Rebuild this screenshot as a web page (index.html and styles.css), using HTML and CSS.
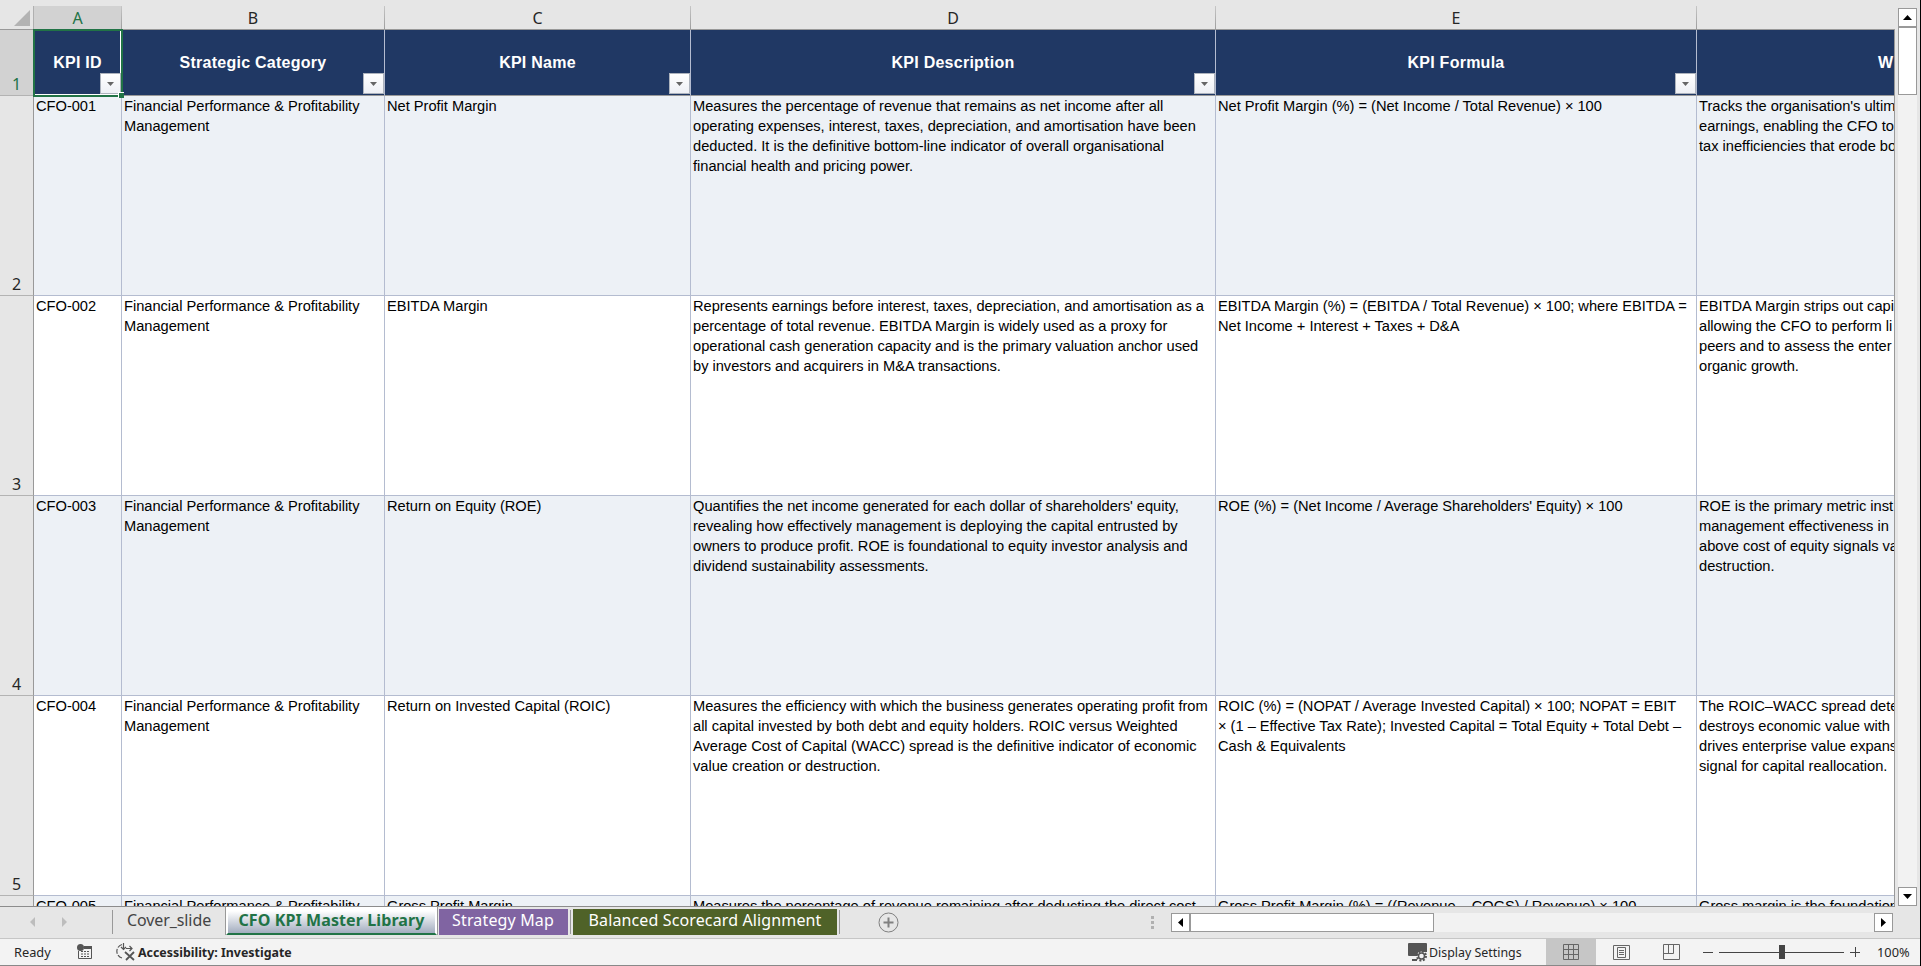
FILE: index.html
```
<!DOCTYPE html>
<html lang="en">
<head>
    <meta charset="UTF-8">
    <meta name="viewport" content="width=device-width, initial-scale=1.0">
    <title>CFO KPI Master Library</title>
    <link rel="stylesheet" href="styles.css">
</head>
<body>
    <div class="workspace">
        <div class="sheet">
            <!-- Column letters -->
            <div class="row letters">
                <div class="corner"></div>
                <div class="letter selected">A</div>
                <div class="letter">B</div>
                <div class="letter">C</div>
                <div class="letter">D</div>
                <div class="letter">E</div>
                <div class="letter"></div>
            </div>

            <!-- Header row -->
            <div class="row titles">
                <div class="number selected">1</div>
                <div class="title active"><span>KPI ID</span><i class="filter"></i><b class="handle"></b></div>
                <div class="title"><span>Strategic Category</span><i class="filter"></i></div>
                <div class="title"><span>KPI Name</span><i class="filter"></i></div>
                <div class="title"><span>KPI Description</span><i class="filter"></i></div>
                <div class="title"><span>KPI Formula</span><i class="filter"></i></div>
                <div class="title last"><span>W</span></div>
            </div>

            <!-- KPI rows -->
            <div class="row banded">
                <div class="number">2</div>
                <div class="cell">CFO-001</div>
                <div class="cell">Financial Performance &amp; Profitability<br>Management</div>
                <div class="cell">Net Profit Margin</div>
                <div class="cell">Measures the percentage of revenue that remains as net income after all<br>operating expenses, interest, taxes, depreciation, and amortisation have been<br>deducted. It is the definitive bottom-line indicator of overall organisational<br>financial health and pricing power.</div>
                <div class="cell">Net Profit Margin (%) = (Net Income / Total Revenue) × 100</div>
                <div class="cell">Tracks the organisation's ultim<br>earnings, enabling the CFO to<br>tax inefficiencies that erode bo</div>
            </div>
            <div class="row">
                <div class="number">3</div>
                <div class="cell">CFO-002</div>
                <div class="cell">Financial Performance &amp; Profitability<br>Management</div>
                <div class="cell">EBITDA Margin</div>
                <div class="cell">Represents earnings before interest, taxes, depreciation, and amortisation as a<br>percentage of total revenue. EBITDA Margin is widely used as a proxy for<br>operational cash generation capacity and is the primary valuation anchor used<br>by investors and acquirers in M&amp;A transactions.</div>
                <div class="cell">EBITDA Margin (%) = (EBITDA / Total Revenue) × 100; where EBITDA =<br>Net Income + Interest + Taxes + D&amp;A</div>
                <div class="cell">EBITDA Margin strips out capi<br>allowing the CFO to perform li<br>peers and to assess the enter<br>organic growth.</div>
            </div>
            <div class="row banded">
                <div class="number">4</div>
                <div class="cell">CFO-003</div>
                <div class="cell">Financial Performance &amp; Profitability<br>Management</div>
                <div class="cell">Return on Equity (ROE)</div>
                <div class="cell">Quantifies the net income generated for each dollar of shareholders' equity,<br>revealing how effectively management is deploying the capital entrusted by<br>owners to produce profit. ROE is foundational to equity investor analysis and<br>dividend sustainability assessments.</div>
                <div class="cell">ROE (%) = (Net Income / Average Shareholders' Equity) × 100</div>
                <div class="cell">ROE is the primary metric inst<br>management effectiveness in<br>above cost of equity signals va<br>destruction.</div>
            </div>
            <div class="row">
                <div class="number">5</div>
                <div class="cell">CFO-004</div>
                <div class="cell">Financial Performance &amp; Profitability<br>Management</div>
                <div class="cell">Return on Invested Capital (ROIC)</div>
                <div class="cell">Measures the efficiency with which the business generates operating profit from<br>all capital invested by both debt and equity holders. ROIC versus Weighted<br>Average Cost of Capital (WACC) spread is the definitive indicator of economic<br>value creation or destruction.</div>
                <div class="cell">ROIC (%) = (NOPAT / Average Invested Capital) × 100; NOPAT = EBIT<br>× (1 – Effective Tax Rate); Invested Capital = Total Equity + Total Debt –<br>Cash &amp; Equivalents</div>
                <div class="cell">The ROIC–WACC spread dete<br>destroys economic value with<br>drives enterprise value expans<br>signal for capital reallocation.</div>
            </div>
            <div class="row banded cut">
                <div class="number"></div>
                <div class="cell">CFO-005</div>
                <div class="cell">Financial Performance &amp; Profitability</div>
                <div class="cell">Gross Profit Margin</div>
                <div class="cell">Measures the percentage of revenue remaining after deducting the direct cost</div>
                <div class="cell">Gross Profit Margin (%) = ((Revenue – COGS) / Revenue) × 100</div>
                <div class="cell">Gross margin is the foundation</div>
            </div>
        </div>

        <div class="vscroll">
            <div class="arrow"><svg width="9" height="5" viewBox="0 0 9 5"><path d="M0 5L4.500 0L9 5z"/></svg></div>
            <div class="thumb"></div>
            <div class="arrow end"><svg width="9" height="5" viewBox="0 0 9 5"><path d="M0 0H9L4.500 5z"/></svg></div>
        </div>
    </div>

    <div class="tabbar">
        <div class="tab-nav">
            <svg width="5" height="10" viewBox="0 0 5 10"><path d="M5 0V10L0 5z"/></svg>
            <svg width="5" height="10" viewBox="0 0 5 10"><path d="M0 0V10L5 5z"/></svg>
        </div>
        <div class="tab cover"><span>Cover_slide</span></div>
        <div class="tab current"><span>CFO KPI Master Library</span></div>
        <div class="tab purple"><span>Strategy Map</span></div>
        <div class="divider"></div>
        <div class="tab green"><span>Balanced Scorecard Alignment</span></div>
        <div class="divider"></div>
        <svg class="add" width="21" height="21" viewBox="0 0 21 21"><circle cx="10.500" cy="10.500" r="9.500"/><path class="plus" d="M10.500 5.500v10M5.500 10.500h10"/></svg>
        <div class="grip"><i></i><i></i><i></i></div>
        <div class="hscroll">
            <div class="arrow"><svg width="5" height="9" viewBox="0 0 5 9"><path d="M5 0V9L0 4.500z"/></svg></div>
            <div class="thumb"></div>
            <div class="arrow end"><svg width="5" height="9" viewBox="0 0 5 9"><path d="M0 0V9L5 4.500z"/></svg></div>
        </div>
    </div>

    <div class="status">
        <span class="ready">Ready</span>
        <svg class="macro" width="16" height="16" viewBox="0 0 16 16"><path class="line" d="M7 2.500H14.500V14.500H1.500V7"/><path d="M7 2h8v3H7z"/><circle cx="3.500" cy="3.500" r="3.500"/><path class="dots" d="M4 7.500h9M4 10h9M4 12.500h9"/></svg>
        <svg class="access" width="19" height="18" viewBox="0 0 19 18"><path class="ring" d="M6 1.500A7 7 0 0 0 6 15"/><path d="M7.500 0v6M5 4l2.500 2.500L10 4M10 5.500h6M13.500 3l2.500 2.500L13.500 8"/><path class="cross" d="M9 9l9 8M18 9l-8 8"/></svg>
        <b class="investigate">Accessibility: Investigate</b>
        <svg class="monitor" width="19" height="19" viewBox="0 0 19 19"><path d="M1 0h17q1 0 1 1v8h-9v4H1q-1 0-1-1V1q0-1 1-1zM4 16h5v2H4z"/><circle class="gear-teeth" cx="13.500" cy="13" r="4.500"/><circle class="gear" cx="13.500" cy="13" r="3"/></svg>
        <span class="display">Display Settings</span>
        <div class="view on"><svg width="16" height="16" viewBox="0 0 16 16"><path d="M.5.500h15v15H.5zM.5 5.500h15M.5 10.500h15M5.500.500v15M10.500.500v15"/></svg></div>
        <div class="view"><svg width="17" height="15" viewBox="0 0 17 15"><path d="M.5.500h16v14H.5zM4.500 2.500h8v10h-8zM6 5.500h5M6 7.500h5M6 9.500h5"/></svg></div>
        <div class="view"><svg width="17" height="16" viewBox="0 0 17 16"><path d="M.5.500h16v15H.5zM.5 9.500h10V.500M5.500.500v9"/></svg></div>
        <div class="zoom"><i class="minus"></i><div class="track"><i class="knob"></i></div><i class="more"></i></div>
        <span class="percent">100%</span>
    </div>
</body>
</html>
```

FILE: styles.css
```
* {
    box-sizing: border-box;
}

body {
    margin: 0;
    width: 1921px;
    height: 966px;
    overflow: hidden;
    background: #e6e6e6;
    border-right: 1px solid #000;
    font-family: "Noto Sans", "Open Sans", sans-serif;
    color: #262626;
}

.workspace {
    display: flex;
    height: 907px;
}

/* Grid */
.sheet {
    width: 1895px;
    height: 907px;
    overflow: hidden;
    border-bottom: 1px solid #8c8c8c;
}

.row {
    display: grid;
    grid-template-columns: 34px 88px 263px 306px 525px 481px 197px;
    width: 1895px;
    height: 200px;
    border-right: 1px solid #999;
}

.cut {
    height: 11px;
    overflow: hidden;
}

.letters {
    height: 30px;
    padding-top: 6px;
    border-right: 0;
    border-bottom: 1px solid #999;
}

.letter {
    border-right: 1px solid;
    border-image: linear-gradient(#c8c8c8, #999) 1;
    text-align: center;
    font-size: 16px;
    line-height: 24px;
}

.letter:last-child {
    border-right: 0;
}

.letter.selected,
.number.selected {
    background: #d2d2d2;
    color: #217346;
}

.corner {
    border-right: 1px solid #b0b0b0;
}

.corner::after {
    content: "";
    display: block;
    width: 16px;
    height: 16px;
    margin: 4px 0 0 14px;
    background: #b3b3b3;
    clip-path: polygon(100% 0, 100% 100%, 0 100%);
}

.number {
    display: flex;
    align-items: flex-end;
    justify-content: center;
    background: #e6e6e6;
    border-right: 1px solid #999;
    border-bottom: 1px solid #b3b3b3;
    font-size: 16px;
    line-height: 22px;
}

.titles {
    height: 66px;
}

.title {
    position: relative;
    display: flex;
    align-items: center;
    justify-content: center;
    background: #203864;
    border-right: 1px solid #b4bcd0;
    border-bottom: 1px solid #999;
    color: #fff;
    font: bold 16px/20px "Liberation Sans", Arial, sans-serif;
    letter-spacing: 0.25px;
    white-space: nowrap;
}

.title.last {
    justify-content: flex-start;
    padding-left: 181px;
    border-right: 0;
    overflow: hidden;
}

.title.active {
    border-right-color: #217346;
    box-shadow: inset 0 0 0 1px #fff;
    outline: 2px solid #217346;
    outline-offset: -1px;
    z-index: 1;
}

.filter {
    position: absolute;
    right: 0;
    bottom: 1px;
    width: 21px;
    height: 21px;
    border: 1px solid #adb3bd;
    background: linear-gradient(#fff, #eef0f5);
}

.filter::after {
    content: "";
    position: absolute;
    left: 6px;
    top: 8px;
    width: 7px;
    height: 4px;
    background: #666;
    clip-path: polygon(0 0, 100% 0, 50% 100%);
}

.handle {
    position: absolute;
    right: -3px;
    bottom: -3px;
    width: 6px;
    height: 6px;
    border: solid #fff;
    border-width: 1px 0 0 1px;
    background: #217346;
}

.cell {
    padding: 0 2px;
    border-right: 1px solid #b4bcd0;
    border-bottom: 1px solid #b4bcd0;
    background: #fff;
    color: #000;
    font: 14.67px/20px "Liberation Sans", Arial, sans-serif;
    letter-spacing: -0.02px;
    white-space: nowrap;
    overflow: hidden;
}

.cell:last-child {
    padding-right: 0;
    border-right: 0;
}

.banded .cell {
    background: #edf1f6;
}

/* Scroll bars */
.vscroll {
    display: flex;
    flex-direction: column;
    width: 19px;
    height: 898px;
    margin: 8px 0 0 3px;
    background: #f2f2f2;
}

.arrow {
    display: flex;
    align-items: center;
    justify-content: center;
    flex: none;
    width: 19px;
    height: 19px;
    border: 1px solid #999;
    background: #fff;
}

.thumb {
    border: 1px solid #999;
    background: #fff;
}

.vscroll .thumb {
    height: 68px;
}

.vscroll .end {
    margin-top: auto;
}

/* Sheet tabs */
.tabbar {
    display: flex;
    height: 32px;
    border-bottom: 1px solid #c6c6c6;
}

.tab-nav {
    display: flex;
    gap: 27px;
    width: 113px;
    height: 24px;
    margin-top: 3px;
    padding: 7px 0 0 30px;
    border-right: 1px solid #999;
}

.tab-nav path {
    fill: #bdbdbd;
}

.tab {
    display: flex;
    justify-content: center;
    height: 26px;
    margin-top: 2px;
    font-size: 16px;
    line-height: 23px;
    white-space: nowrap;
}

.cover {
    width: 113px;
    padding-right: 1px;
    color: #444;
    letter-spacing: -0.08px;
}

.current {
    width: 211px;
    height: 28px;
    margin-top: 0;
    padding-top: 2px;
    border: 2px solid #fff;
    border-top: 0;
    border-bottom: 2px solid #217346;
    background: linear-gradient(#fff 15%, #a3adbf);
    color: #217346;
    font-weight: bold;
    letter-spacing: 0.1px;
    box-shadow: -1px 0 #999, 1px 0 #999;
}

.purple {
    width: 129px;
    margin-left: 2px;
    padding-right: 1px;
    background: #8064a2;
    color: #fff;
    letter-spacing: 0.15px;
}

.green {
    width: 264px;
    margin-left: 2px;
    background: #4f6228;
    color: #fff;
    letter-spacing: 0.13px;
}

.divider {
    width: 1px;
    height: 24px;
    margin: 3px 0 0 2px;
    background: #999;
}

.add {
    margin: 5px 0 0 38px;
    fill: none;
    stroke: #808080;
}

.add .plus {
    stroke-width: 2;
}

.grip {
    display: flex;
    flex-direction: column;
    gap: 2px;
    width: 3px;
    margin: 9px 0 0 252px;
}

.grip i {
    height: 3px;
    background: #b0b0b0;
}

.hscroll {
    display: flex;
    width: 722px;
    height: 19px;
    margin: 6px 0 0 17px;
    background: #f2f2f2;
}

.hscroll .thumb {
    width: 244px;
}

.hscroll .end {
    margin-left: auto;
}

/* Status bar */
.status {
    display: flex;
    align-items: center;
    height: 27px;
    background: #f3f3f3;
    border-bottom: 1px solid #888;
    font-size: 12.4px;
    white-space: nowrap;
}

.ready {
    width: 63px;
    padding-left: 14px;
    font-size: 12.8px;
}

.macro {
    margin-left: 14px;
    fill: #555;
}

.macro .line {
    fill: none;
    stroke: #555;
}

.macro .dots {
    stroke: #555;
    stroke-dasharray: 2 1;
}

.access {
    margin-left: 23px;
    fill: none;
    stroke: #555;
    stroke-width: 1.2;
}

.access .ring {
    stroke-dasharray: 5 1.500;
}

.access .cross {
    stroke-width: 1.8;
}

.investigate {
    width: 153px;
    margin-left: 3px;
}

.monitor {
    margin-left: 1117px;
    fill: #555;
}

.gear-teeth {
    fill: #f3f3f3;
    stroke: #555;
    stroke-width: 2;
    stroke-dasharray: 2 1.500;
}

.gear {
    fill: #f3f3f3;
    stroke: #555;
    stroke-width: 1.500;
}

.display {
    width: 117px;
    margin-left: 2px;
}

.view {
    display: flex;
    align-items: center;
    justify-content: center;
    width: 50px;
    height: 26px;
}

.view.on {
    background: #c6c6c6;
}

.view path {
    fill: none;
    stroke: #666;
}

.zoom {
    display: flex;
    align-items: center;
    margin-left: 7px;
}

.minus {
    width: 10px;
    height: 1px;
    background: #444;
}

.track {
    display: flex;
    align-items: center;
    justify-content: center;
    width: 125px;
    height: 1px;
    margin: 0 6px;
    background: #444;
}

.knob {
    width: 6px;
    height: 14px;
    background: #444;
}

.more {
    width: 10px;
    height: 10px;
    background: linear-gradient(#444, #444) center / 10px 1px no-repeat, linear-gradient(#444, #444) center / 1px 10px no-repeat;
}

.percent {
    margin-left: 17px;
    font-size: 12.8px;
}
```
